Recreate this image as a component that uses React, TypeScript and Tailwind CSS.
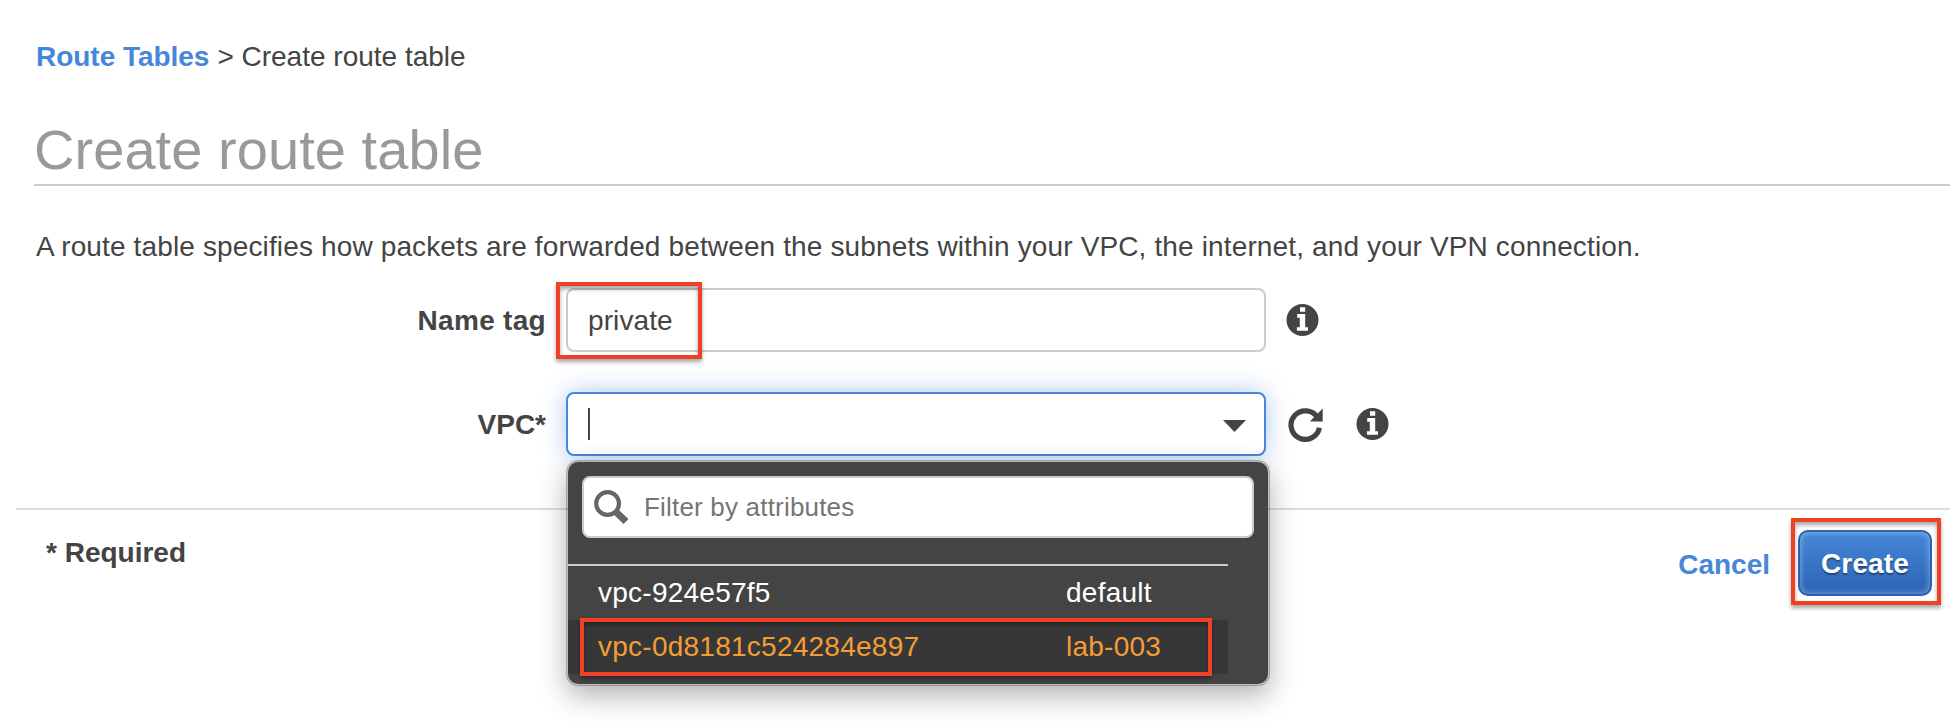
import React from "react";

function InfoIcon() {
  return (
    <svg className="block h-8 w-[33px] shrink-0" viewBox="0 0 33 32">
      <circle cx="16.5" cy="16" r="16" fill="#444" />
      <path fill="#fff" d="M14 3.2h5.2v4.5H14zM11.2 10h8v13.2h2.8v3.6H10.9v-3.6h2.9v-9.4h-2.6z" />
    </svg>
  );
}

function RefreshIcon() {
  return (
    <svg className="block h-[36px] w-[36px] shrink-0" viewBox="0 0 36 36">
      <path d="M32.4 21.7A14.3 14.3 0 1 1 30.7 11.9" fill="none" stroke="#444" strokeWidth="5.2" />
      <path d="M35.7 2.5v12.9H22.8z" fill="#444" />
    </svg>
  );
}

function SearchIcon() {
  return (
    <svg className="block h-[34px] w-[34px] shrink-0" viewBox="0 0 34 34">
      <circle cx="13.6" cy="13.5" r="11.4" fill="none" stroke="#666" strokeWidth="4.2" />
      <path d="M21.5 21.5L32 31.5" stroke="#666" strokeWidth="7" />
    </svg>
  );
}

export default function App() {
  return (
    <div className="h-[728px] w-[1958px] overflow-hidden bg-white pt-[41px] font-['Liberation_Sans',Arial,sans-serif] text-[28px] leading-8 whitespace-nowrap text-[#444]">
      <nav className="flex h-8 pl-9">
        <a className="font-bold tracking-[-0.03px] text-[#4687d9]">Route Tables</a>
        <span className="pl-2">&gt; Create route table</span>
      </nav>
      <h1 className="mt-[45px] mr-2 ml-[34px] h-[68px] border-b-2 border-[#ccc] text-[56px] leading-[64px] tracking-[0.06px] text-[#999]">
        Create route table
      </h1>
      <p className="mt-[45px] h-8 pl-9 tracking-[0.136px]">
        A route table specifies how packets are forwarded between the subnets within your VPC, the internet, and your VPN connection.
      </p>

      <div className="mt-[25px] flex h-16 items-center">
        <label className="w-[546px] pt-0.5 text-right font-bold tracking-[0.3px]">Name tag</label>
        <div className="relative ml-5 flex h-16 w-[700px] items-center rounded-lg border-2 border-[#ccc] pl-5">
          <span className="pt-0.5 tracking-[0.1px]">private</span>
          <div className="absolute -top-2 -left-3 h-[77px] w-[146px] border-4 border-[#ee4126] shadow-[0_3px_4px_rgba(0,0,0,0.35),inset_0_3px_4px_rgba(0,0,0,0.35)]" />
        </div>
        <div className="ml-5"><InfoIcon /></div>
      </div>

      <div className="mt-10 flex h-16 items-center">
        <label className="w-[546px] pt-0.5 text-right font-bold">VPC*</label>
        <div className="relative ml-5 flex h-16 w-[700px] items-center justify-between rounded-lg border-2 border-[#4687d9] bg-white pr-[18px] pl-5 shadow-[0_0_24px_rgba(70,135,217,0.45)]">
          <div className="h-8 w-0.5 bg-[#444]" />
          <svg className="mt-1 block h-3 w-[23px]" viewBox="0 0 23 12">
            <path d="M0 0h23L11.5 12z" fill="#444" />
          </svg>
          <div className="absolute top-[66px] -left-0.5 z-10 h-[226px] w-[704px] rounded-xl border-2 border-black/25 bg-[#444] bg-clip-padding shadow-[0_10px_28px_rgba(0,0,0,0.3)]">
            <div className="mt-3.5 ml-3.5 flex h-[62px] w-[672px] items-center rounded-lg border-2 border-[#ccc] bg-white pl-2.5 text-[26px] tracking-[0.19px] text-[#757575]">
              <SearchIcon />
              <span className="pl-4">Filter by attributes</span>
            </div>
            <div className="mt-[26px] w-[660px] border-t-2 border-[#ccc] tracking-[0.25px] text-white">
              <div className="flex h-[54px] items-center pl-[30px]">
                <span className="w-[468px]">vpc-924e57f5</span>
                <span>default</span>
              </div>
              <div className="relative flex h-[54px] items-center bg-[#373737] pl-[30px] text-[#f49d37]">
                <span className="w-[468px]">vpc-0d8181c524284e897</span>
                <span>lab-003</span>
                <div className="absolute -top-0.5 left-3 h-[58px] w-[632px] border-4 border-[#ee4126] shadow-[0_3px_4px_rgba(0,0,0,0.35),inset_0_3px_4px_rgba(0,0,0,0.35)]" />
              </div>
            </div>
          </div>
        </div>
        <div className="ml-[21px]"><RefreshIcon /></div>
        <div className="ml-[33px]"><InfoIcon /></div>
      </div>

      <footer className="mt-[52px] mr-2 ml-4 flex justify-between border-t-2 border-[#ddd] font-bold">
        <span className="mt-[27px] pl-[30px]">* Required</span>
        <div className="mt-5 mr-[18px] flex">
          <a className="mt-[19px] mr-7 text-[#4687d9]">Cancel</a>
          <button className="relative h-[66px] w-[134px] rounded-[10px] border-2 border-[#2a62b4] bg-linear-to-b from-[#4687d9] to-[#2b63b3] pt-0.5 text-center font-bold text-white shadow-[inset_0_0_6px_rgba(255,255,255,0.45)] [text-shadow:0_2px_1px_rgba(0,0,0,0.35)]">
            <span className="tracking-[0.15px]">Create</span>
            <div className="absolute -top-3.5 -left-[9px] h-[87px] w-[150px] border-4 border-[#ee4126] shadow-[0_3px_4px_rgba(0,0,0,0.35),inset_0_3px_4px_rgba(0,0,0,0.35)]" />
          </button>
        </div>
      </footer>
    </div>
  );
}
